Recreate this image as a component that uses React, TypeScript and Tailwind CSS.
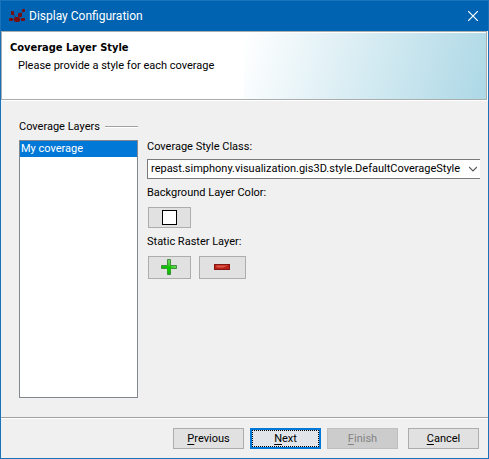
import type { ButtonHTMLAttributes } from "react";

function RepastLogo() {
  return (
    <svg width="17" height="14" viewBox="0 0 17 14" fill="#780c10" aria-hidden="true">
      <path d="M3 4l5 6M11 6L8 10M14 2l-3 4M1 10.5h14" stroke="#432850" strokeWidth="1" fill="none" />
      <rect x="2" y="2" width="3" height="4" rx="1" />
      <rect x="13" y="0" width="3" height="3" rx="1" />
      <rect x="9" y="4" width="4" height="4" rx="1" />
      <rect x="5" y="8" width="6" height="5" rx="2" />
      <rect x="0" y="9" width="4" height="3" rx="1" />
      <rect x="12" y="9" width="4" height="3" rx="1" />
    </svg>
  );
}

function PlusIcon() {
  return (
    <svg width="16" height="16" viewBox="0 0 16 16" aria-hidden="true">
      <defs>
        <linearGradient id="plus" gradientUnits="userSpaceOnUse" x1="14" y1="1" x2="4" y2="12">
          <stop offset="0" stopColor="#9be093" />
          <stop offset="0.5" stopColor="#3fd02f" />
          <stop offset="1" stopColor="#08b800" />
        </linearGradient>
      </defs>
      <path
        d="M6.5.5h3v6h6v3h-6v6h-3v-6h-6v-3h6z"
        fill="url(#plus)"
        stroke="#3f8f3d"
        strokeWidth="1"
      />
      <path d="M6 7h4v5H6zM3 7h4v2H3z" fill="#12c400" />
    </svg>
  );
}

function MinusIcon() {
  return (
    <svg width="16" height="6" viewBox="0 0 16 6" aria-hidden="true">
      <rect x="0.5" y="0.5" width="15" height="5" fill="#ba2018" stroke="#851512" />
      <path d="M2 1.5h12l-5 2H3z" fill="#dc5a45" />
    </svg>
  );
}

type WizardButtonProps = ButtonHTMLAttributes<HTMLButtonElement> & { label: string };

function WizardButton({ label, ...rest }: WizardButtonProps) {
  return (
    <button
      type="button"
      className="flex h-[21px] w-[71px] items-center justify-center border border-[#adadad] bg-[#e1e1e1] disabled:border-[#bfbfbf] disabled:bg-[#cccccc] disabled:text-[#838383]"
      {...rest}
    >
      <span>
        <span className="underline underline-offset-2">{label[0]}</span>
        {label.slice(1)}
      </span>
    </button>
  );
}

export default function App() {
  return (
    <div className="flex min-h-screen flex-col border border-[#1a72b8] bg-[#f0f0f0] font-[Roboto,sans-serif] text-[11px] leading-4 text-black">
      <header className="flex h-[30px] items-center bg-[#0063b1] pr-[7px] pl-2 text-white">
        <RepastLogo />
        <h1 className="ml-[3px] flex-1 text-xs">Display Configuration</h1>
        <button type="button" aria-label="Close" className="flex size-4 items-center justify-center">
          <svg width="10" height="10" viewBox="0 0 10 10" stroke="white" fill="none" aria-hidden="true">
            <path d="M0 0l10 10M10 0L0 10" strokeWidth="1.2" />
          </svg>
        </button>
      </header>

      <div className="bg-white pr-px pb-px">
        <section className="flex h-[69px] border border-[#a9adae] bg-white pt-px">
          <div className="w-1/2 shrink-0 pt-[7px] pl-2 whitespace-nowrap">
            <h2 className="font-['DejaVu_Sans_Condensed',sans-serif] font-bold">Coverage Layer Style</h2>
            <p className="mt-[2px] pl-2">Please provide a style for each coverage</p>
          </div>
          <div className="flex-1 bg-linear-[105deg,#ffffff,#add8e6]" />
        </section>
      </div>

      <main className="flex flex-1 items-stretch gap-[9px] pt-[18px] pr-2 pb-[19px] pl-[18px]">
        <section className="flex w-[119px] shrink-0 flex-col">
          <div className="flex items-center gap-[5px]">
            <h3 id="layers" className="whitespace-nowrap">Coverage Layers</h3>
            <span className="h-[2px] flex-1 border-t border-b border-t-[#a0a0a0] border-b-white" />
          </div>
          <ul role="listbox" aria-labelledby="layers" className="mt-[5px] flex-1 border border-[#828790] bg-white">
            <li role="option" aria-selected="true" className="h-4 bg-[#0078d7] pl-px text-white">
              My coverage
            </li>
          </ul>
        </section>

        <form className="min-w-0 flex-1 pt-5">
          <label htmlFor="style-class" className="block">Coverage Style Class:</label>
          <div className="mt-1 grid h-5 grid-cols-1 items-center">
            <select
              id="style-class"
              className="col-start-1 row-start-1 h-5 w-full appearance-none border border-r-0 border-[#7a7a7a] bg-white pr-4 pl-[3px]"
            >
              <option>repast.simphony.visualization.gis3D.style.DefaultCoverageStyle</option>
            </select>
            <svg
              className="pointer-events-none col-start-1 row-start-1 mr-[3px] justify-self-end"
              width="8"
              height="6"
              viewBox="0 0 8 6"
              fill="none"
              stroke="#555555"
              strokeWidth="1.2"
              aria-hidden="true"
            >
              <path d="M0 1l4 4 4-4" />
            </svg>
          </div>
          <label htmlFor="background" className="mt-[6px] block">Background Layer Color:</label>
          <button
            id="background"
            type="button"
            className="mt-[6px] ml-px flex h-[21px] w-[43px] items-center justify-center border border-[#adadad] bg-[#e1e1e1]"
          >
            <span className="size-[15px] border border-black bg-white" />
          </button>
          <p className="mt-[6px]">Static Raster Layer:</p>
          <div className="mt-[6px] ml-px flex gap-2">
            <button
              type="button"
              aria-label="Add raster layer"
              className="flex h-[23px] w-[43px] items-center justify-center border border-[#adadad] bg-[#e1e1e1] pr-px pb-px"
            >
              <PlusIcon />
            </button>
            <button
              type="button"
              aria-label="Remove raster layer"
              className="flex h-[23px] w-[47px] items-center justify-center border border-[#adadad] bg-[#e1e1e1] pr-px pb-px"
            >
              <MinusIcon />
            </button>
          </div>
        </form>
      </main>

      <footer className="border-t border-[#a0a0a0]">
        <div className="flex h-10 items-start justify-end gap-[6px] border-t border-white pt-[9px] pr-[9px]">
          <WizardButton label="Previous" />
          <button type="button" className="flex h-[21px] w-[71px] border-2 border-[#0078d7] bg-[#e1e5e9]">
            <span className="flex h-full w-full items-center justify-center border border-dotted border-black">
              <span>
                <span className="underline underline-offset-2">N</span>ext
              </span>
            </span>
          </button>
          <WizardButton label="Finish" disabled />
          <div className="ml-1">
            <WizardButton label="Cancel" />
          </div>
        </div>
      </footer>
    </div>
  );
}
